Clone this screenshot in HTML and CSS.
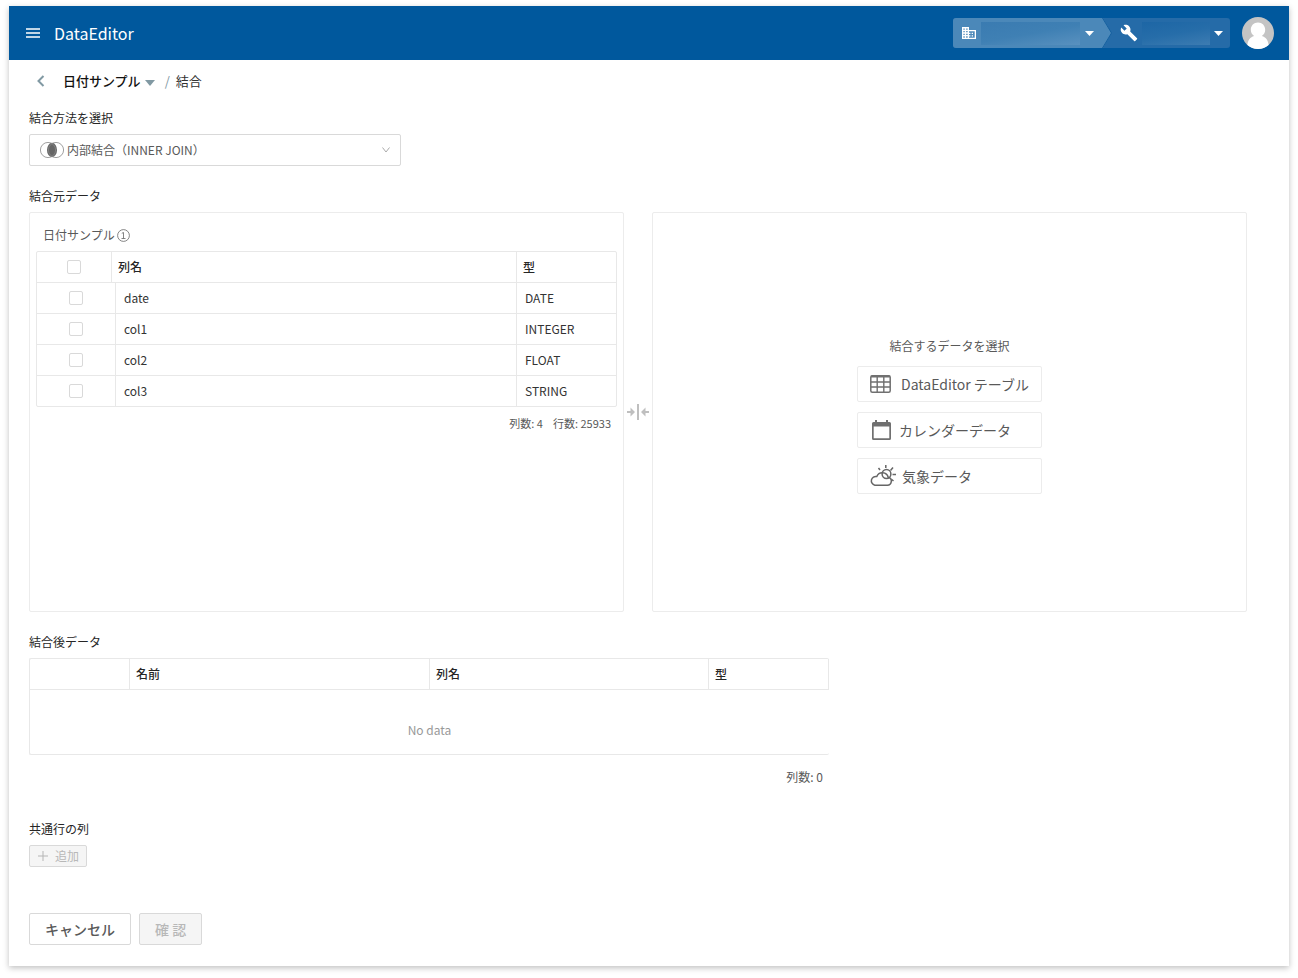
FILE: index.html
```html
<!DOCTYPE html>
<html lang="ja">
<head>
<meta charset="utf-8">
<meta name="viewport" content="width=device-width, initial-scale=1">
<title>DataEditor</title>
<link rel="stylesheet" href="styles.css">
</head>
<body>
<div class="window">
  <header class="topbar">
    <button class="icon-button menu" type="button" aria-label="メニュー">
      <svg width="14" height="10" viewBox="0 0 14 10"><path d="M0 1h14M0 5h14M0 9h14" stroke="#fff" stroke-width="1.5"/></svg>
    </button>
    <h1 class="brand">DataEditor</h1>
    <div class="switcher">
      <button class="segment segment-org" type="button" aria-label="組織">
        <svg width="14" height="14" viewBox="0 0 14 14"><path fill="#fff" fill-rule="evenodd" d="M0 1h7v3h7v9H0zM1.400 2.400v1.300h1.300V2.400zM4.200 2.400v1.300h1.400V2.400zM1.400 5v1.300h1.300V5zM4.200 5v1.300h1.400V5zM1.400 7.700V9h1.300V7.700zM4.200 7.700V9h1.400V7.700zM1.400 10.300v1.400h1.300v-1.400zM4.200 10.300v1.400h1.400v-1.400zM7 5.300v1.400h1.400V8H7v1.300h1.400v1.200H7v1.200h5.700V5.300z"/><path fill="#fff" d="M9.700 6.700H11V8H9.700zM9.700 9.300H11v1.200H9.700z"/></svg>
        <span class="hidden-name hidden-org"></span>
        <svg width="9" height="5" viewBox="0 0 9 5"><path fill="#fff" d="M0 0h9L4.500 5z"/></svg>
      </button>
      <svg class="divider" width="10" height="30" viewBox="0 0 10 30"><path d="M0 0h1l8.500 15L1 30H0z" fill="#4b88b9"/><path d="M.5 0L9.500 15 .5 30" fill="none" stroke="#14609f"/></svg>
      <button class="segment segment-project" type="button" aria-label="プロジェクト">
        <svg width="18" height="18" viewBox="0 0 24 24"><path fill="#fff" d="M22.700 19l-9.100-9.100c.9-2.300.4-5-1.500-6.900-2-2-5-2.400-7.400-1.300L9 6 6 9 1.600 4.700C.4 7.100.9 10.100 2.900 12.100c1.900 1.900 4.600 2.400 6.900 1.500l9.100 9.100c.4.4 1 .4 1.400 0l2.300-2.300c.5-.4.5-1.100.1-1.400z"/></svg>
        <span class="hidden-name hidden-project"></span>
        <svg width="9" height="5" viewBox="0 0 9 5"><path fill="#fff" d="M0 0h9L4.500 5z"/></svg>
      </button>
    </div>
    <button class="icon-button avatar" type="button" aria-label="アカウント">
      <svg width="32" height="32" viewBox="0 0 32 32"><circle cx="16" cy="16" r="16" fill="#c4c4c4"/><path fill="#fff" d="M16 5.500c-4.200 0-7.200 3.200-7.200 7.300 0 2.700 1.400 5 3.300 6.200-3.800 1-6.300 4-6.700 9A16 16 0 0 0 16 32a16 16 0 0 0 10.600-4c-.4-5-2.900-8-6.700-9 1.900-1.200 3.300-3.500 3.300-6.200 0-4.100-3-7.300-7.200-7.300z"/></svg>
    </button>
  </header>

  <main class="content">
    <nav class="crumbs" aria-label="パンくず">
      <button class="icon-button back" type="button" aria-label="戻る">
        <svg width="8" height="12" viewBox="0 0 8 12"><path d="M6.500 1L1.500 6l5 5" fill="none" stroke="#8199a3" stroke-width="2"/></svg>
      </button>
      <button class="crumb-menu" type="button">日付サンプル
        <svg width="10" height="10" viewBox="0 0 10 10"><path fill="#8199a3" d="M0 4h10L5 10z"/></svg>
      </button>
      <span class="slash">/</span>
      <span class="crumb-current">結合</span>
    </nav>

    <section class="join-type">
      <label class="label" for="join">結合方法を選択</label>
      <div class="select-box">
        <svg class="select-venn" width="24" height="16" viewBox="0 0 24 16"><ellipse cx="12" cy="8" rx="5" ry="7.200" fill="#666"/><circle cx="8" cy="8" r="7.600" fill="none" stroke="#888" stroke-width=".8"/><circle cx="16" cy="8" r="7.600" fill="none" stroke="#888" stroke-width=".8"/></svg>
        <select id="join" class="select"><option>内部結合（INNER JOIN）</option></select>
        <svg class="select-chevron" width="8" height="6" viewBox="0 0 8 6"><path d="M.5.500L4 5 7.500.5" fill="none" stroke="#aaa"/></svg>
      </div>
    </section>

    <section class="source">
      <h2 class="label">結合元データ</h2>
      <div class="panels">
        <div class="panel panel-left">
          <h3 class="panel-title">日付サンプル
            <svg width="13" height="13" viewBox="0 0 13 13" fill="none" stroke="#666" stroke-width=".8"><circle cx="6.500" cy="6.500" r="5.900"/><path d="M4.800 4.300l1.700-.8V9.500M4.500 9.500h4"/></svg>
          </h3>
          <table class="grid-table columns-table">
            <thead>
              <tr><th><input type="checkbox" class="check" aria-label="すべて選択"></th><th>列名</th><th>型</th></tr>
            </thead>
            <tbody>
              <tr><td><input type="checkbox" class="check" aria-label="date"></td><td>date</td><td>DATE</td></tr>
              <tr><td><input type="checkbox" class="check" aria-label="col1"></td><td>col1</td><td>INTEGER</td></tr>
              <tr><td><input type="checkbox" class="check" aria-label="col2"></td><td>col2</td><td>FLOAT</td></tr>
              <tr><td><input type="checkbox" class="check" aria-label="col3"></td><td>col3</td><td>STRING</td></tr>
            </tbody>
          </table>
          <p class="counts"><span>列数: 4</span><span>行数: 25933</span></p>
        </div>
        <svg class="merge" width="22" height="16" viewBox="0 0 22 16"><path d="M0 8h6M16 8h6M11 0v16" stroke="#bfbfbf" stroke-width="2"/><path fill="#bfbfbf" d="M3.500 3.500L8 8l-4.500 4.500zM18.500 3.500L14 8l4.500 4.500z"/></svg>
        <div class="panel panel-right">
          <p class="choose-title">結合するデータを選択</p>
          <button class="choice choice-table" type="button">
            <svg width="21" height="18" viewBox="0 0 21 18"><rect x=".8" y=".8" width="19.400" height="16.400" rx="1.500" fill="none" stroke="#707070" stroke-width="1.500"/><path d="M1 1.500h19" stroke="#707070" stroke-width="2"/><path d="M1 7h19M1 12h19M7.200 2v15M13.800 2v15" stroke="#707070" stroke-width="1.400"/></svg>
            DataEditor テーブル
          </button>
          <button class="choice choice-calendar" type="button">
            <svg width="19" height="20" viewBox="0 0 19 20"><path fill="#707070" fill-rule="evenodd" d="M3 0h2v2h9V0h2v2h1.500Q19 2 19 3.500v15q0 1.500-1.500 1.500h-16Q0 20 0 18.500v-15Q0 2 1.500 2H3zM1.700 6.500v11.800h15.600V6.500z"/></svg>
            カレンダーデータ
          </button>
          <button class="choice choice-weather" type="button">
            <svg width="26" height="22" viewBox="0 0 26 22" fill="none" stroke="#666" stroke-width="1.500"><path d="M4.800 20.200h12.400a4 4 0 0 0 1-7.900A6 6 0 0 0 6.800 11.500a4.400 4.400 0 0 0-2 8.700z"/><circle cx="16.500" cy="9" r="4.400"/><path d="M15.800 0v3M8.500 3l1.500 2M23 2.500l-2.500 3M22.500 9.500H26M21.800 14.500l1.700 1.500"/></svg>
            気象データ
          </button>
        </div>
      </div>
    </section>

    <section class="result">
      <h2 class="label">結合後データ</h2>
      <table class="grid-table result-table">
        <thead>
          <tr><th></th><th>名前</th><th>列名</th><th>型</th></tr>
        </thead>
        <tbody>
          <tr><td colspan="4">No data</td></tr>
        </tbody>
      </table>
      <p class="result-count">列数: 0</p>
    </section>

    <section class="common">
      <h2 class="label">共通行の列</h2>
      <button class="button button-small" type="button" disabled>
        <svg width="10" height="10" viewBox="0 0 10 10"><path d="M0 5h10M5 0v10" stroke="#b5b5b5"/></svg>
        追加
      </button>
    </section>

    <div class="actions">
      <button class="button" type="button">キャンセル</button>
      <button class="button" type="button" disabled>確 認</button>
    </div>
  </main>
</div>
</body>
</html>
```

FILE: styles.css
```css
* {
  box-sizing: border-box;
}

body {
  margin: 0;
  padding: 6px 9px 12px;
  background: #fff;
  color: #333;
  font-family: "Noto Sans CJK JP", "Noto Sans", sans-serif;
  font-size: 12px;
  line-height: 20px;
}

h1, h2, h3, p {
  margin: 0;
  font-weight: 400;
}

button, select, input {
  margin: 0;
  font: inherit;
}

svg {
  flex: none;
  display: block;
}

.window {
  background: #fff;
  box-shadow: 0 2px 6px rgba(0, 0, 0, 0.25);
}

/* Top bar */
.topbar {
  display: flex;
  align-items: center;
  height: 54px;
  padding: 0 15px 0 17px;
  background: #00589d;
  color: #fff;
}

.icon-button {
  display: flex;
  align-items: center;
  justify-content: center;
  padding: 0;
  border: 0;
  background: none;
}

.brand {
  margin: 0 auto 0 14px;
  font-size: 16px;
  line-height: 24px;
}

.switcher {
  display: flex;
  height: 30px;
  margin-right: 12px;
  border-radius: 3px;
  overflow: hidden;
  background: #256ba8;
}

.segment {
  display: flex;
  align-items: center;
  padding: 0;
  border: 0;
  background: none;
}

.segment-org {
  gap: 5px;
  padding: 0 8px 0 9px;
  background: #4b88b9;
}

.segment-project {
  gap: 4px;
  padding: 0 7px 0 8px;
}

.hidden-name {
  height: 23px;
}

.hidden-org {
  width: 99px;
  background: linear-gradient(170deg, #3a7bb1, #3f80b4 50%, #5991bf);
}

.hidden-project {
  width: 68px;
  background: linear-gradient(170deg, #1d66a5, #266da9 50%, #3d7cb2);
}

/* Main content */
.content {
  padding: 9px 42px 21px 20px;
}

.crumbs {
  display: flex;
  align-items: center;
  height: 24px;
  margin-bottom: 15px;
  padding-left: 8px;
  font-size: 13px;
}

.crumb-menu {
  display: flex;
  align-items: center;
  gap: 4px;
  margin: 0 10px 0 18px;
  padding: 0;
  border: 0;
  background: none;
  color: #111;
  font-weight: 500;
}

.slash {
  margin-right: 6px;
  color: #8199a3;
}

.label {
  display: block;
  margin-bottom: 6px;
  color: #262626;
  font-size: 12px;
  line-height: 20px;
}

.select-box {
  display: grid;
  align-items: center;
  width: 372px;
  max-width: 100%;
}

.select-box > * {
  grid-area: 1 / 1;
}

.select {
  appearance: none;
  width: 100%;
  height: 32px;
  padding: 0 24px 0 37px;
  border: 1px solid #d9d9d9;
  border-radius: 2px;
  background: none;
  color: #595959;
}

.select-venn {
  margin-left: 11px;
}

.select-chevron {
  justify-self: end;
  margin-right: 11px;
}

.source {
  margin-top: 20px;
}

.panels {
  display: grid;
  grid-template-columns: minmax(0, 1fr) auto minmax(0, 1fr);
  align-items: center;
}

.panel {
  min-height: 400px;
  border: 1px solid #ececec;
  border-radius: 2px;
}

.merge {
  margin: 0 3px;
}

.panel-left {
  padding: 12px 6px;
}

.panel-title {
  display: flex;
  align-items: center;
  gap: 2px;
  padding: 0 7px;
  margin-bottom: 6px;
  color: #595959;
  font-size: 12px;
}

/* Tables */
.grid-table {
  display: block;
  border: 1px solid #e8e8e8;
  border-radius: 2px;
}

.grid-table thead,
.grid-table tbody {
  display: block;
}

.grid-table tr {
  display: grid;
}

.grid-table th,
.grid-table td {
  height: 30px;
  padding: 5px 6px;
  text-align: left;
}

.grid-table th {
  color: #262626;
  font-weight: 500;
}

.grid-table th + th,
.columns-table td + td {
  border-left: 1px solid #e8e8e8;
}

.columns-table thead tr {
  grid-template-columns: 74px 1fr 100px;
}

.columns-table tbody tr {
  grid-template-columns: 78px 1fr 100px;
  border-top: 1px solid #e8e8e8;
}

.columns-table td {
  padding: 5px 8px;
}

.columns-table th:first-child,
.columns-table td:first-child {
  display: flex;
  align-items: center;
  justify-content: center;
}

.check {
  appearance: none;
  width: 14px;
  height: 14px;
  border: 1px solid #d9d9d9;
  border-radius: 2px;
  background: #fff;
}

.counts {
  display: flex;
  justify-content: flex-end;
  gap: 10px;
  padding: 6px 6px 0;
  color: #595959;
  font-size: 11px;
}

/* Data choices */
.panel-right {
  display: flex;
  flex-direction: column;
  align-items: center;
  justify-content: center;
  gap: 10px;
  padding-top: 6px;
}

.choose-title {
  color: #595959;
}

.choice {
  display: flex;
  align-items: center;
  width: 185px;
  height: 36px;
  padding: 0 12px;
  border: 1px solid #ececec;
  border-radius: 2px;
  background: #fff;
  color: #595959;
  font-size: 14px;
  white-space: nowrap;
}

.choice-table {
  gap: 10px;
}

.choice-calendar {
  gap: 8px;
  padding-left: 14px;
}

.choice-weather {
  gap: 6px;
}

/* Joined result */
.result {
  width: 800px;
  max-width: 100%;
  margin-top: 20px;
}

.result-table {
  border-right: 0;
}

.result-table thead tr {
  grid-template-columns: 99px 300px 1fr 120px;
  border-right: 1px solid #e8e8e8;
  border-bottom: 1px solid #e8e8e8;
}

.result-table td {
  height: 64px;
  padding: 30px 0 14px;
  color: #999;
  text-align: center;
}

.result-count {
  padding: 12px 6px 0;
  color: #595959;
  text-align: right;
}

.common {
  margin-top: 32px;
}

.button {
  display: flex;
  align-items: center;
  justify-content: center;
  height: 32px;
  padding: 0 15px;
  border: 1px solid #d9d9d9;
  border-radius: 2px;
  background: #fff;
  color: #595959;
  font-size: 14px;
  font-weight: 500;
}

.button:disabled {
  background: #f5f5f5;
  color: #b8b8b8;
}

.button-small {
  gap: 7px;
  height: 22px;
  padding: 0 7px 0 8px;
  font-size: 12px;
  font-weight: 400;
}

.actions {
  display: flex;
  gap: 8px;
  margin-top: 46px;
}
```
